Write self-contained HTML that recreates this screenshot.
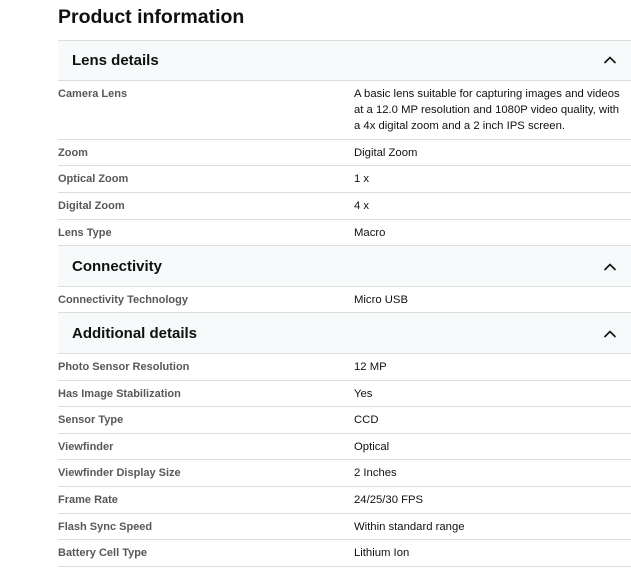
<!DOCTYPE html>
<html><head><style>
body{margin:0;background:#fff;font-family:"Liberation Sans",Arial,sans-serif;width:631px;height:569px;overflow:hidden;position:relative}
h1{position:absolute;left:58px;top:6px;margin:0;font-size:19.5px;font-weight:bold;color:#0f1111}
.r{position:absolute;left:58px;width:573px;border-bottom:1px solid #ddd;box-sizing:border-box}
.h{background:#f7fafa;border-top:1px solid #ddd}
.h span{position:absolute;left:14px;font-size:15px;font-weight:bold;color:#0f1111}
.h svg{position:absolute;left:545px}
.l{position:absolute;left:0;top:7px;font-size:11px;font-weight:bold;color:#565959}
.v{position:absolute;left:296px;top:5px;font-size:11.3px;line-height:16px;color:#0f1111;width:272px}
</style></head><body>
<h1>Product information</h1>

<div class="r h" style="top:40px;height:41px"><span style="top:11px">Lens details</span><svg style="top:14px" width="14" height="10" viewBox="0 0 14 10"><path d="M1.5 8 L7 2.5 L12.5 8" fill="none" stroke="#0f1111" stroke-width="1.6"/></svg></div>
<div class="r" style="top:81px;height:59px"><div class="l">Camera Lens</div><div class="v" style="top:5px">A basic lens suitable for capturing images and videos at a 12.0 MP resolution and 1080P video quality, with a 4x digital zoom and a 2 inch IPS screen.</div></div>
<div class="r" style="top:140px;height:26px"><div class="l">Zoom</div><div class="v">Digital Zoom</div></div>
<div class="r" style="top:166px;height:27px"><div class="l">Optical Zoom</div><div class="v">1 x</div></div>
<div class="r" style="top:193px;height:27px"><div class="l">Digital Zoom</div><div class="v">4 x</div></div>
<div class="r" style="top:220px;height:26px"><div class="l">Lens Type</div><div class="v">Macro</div></div>

<div class="r h" style="top:245px;height:42px"><span style="top:12px">Connectivity</span><svg style="top:16px" width="14" height="10" viewBox="0 0 14 10"><path d="M1.5 8 L7 2.5 L12.5 8" fill="none" stroke="#0f1111" stroke-width="1.6"/></svg></div>
<div class="r" style="top:287px;height:26px"><div class="l">Connectivity Technology</div><div class="v">Micro USB</div></div>

<div class="r h" style="top:312px;height:42px"><span style="top:12px">Additional details</span><svg style="top:16px" width="14" height="10" viewBox="0 0 14 10"><path d="M1.5 8 L7 2.5 L12.5 8" fill="none" stroke="#0f1111" stroke-width="1.6"/></svg></div>
<div class="r" style="top:354px;height:27px"><div class="l">Photo Sensor Resolution</div><div class="v">12 MP</div></div>
<div class="r" style="top:381px;height:26px"><div class="l">Has Image Stabilization</div><div class="v">Yes</div></div>
<div class="r" style="top:407px;height:27px"><div class="l">Sensor Type</div><div class="v">CCD</div></div>
<div class="r" style="top:434px;height:26px"><div class="l">Viewfinder</div><div class="v">Optical</div></div>
<div class="r" style="top:460px;height:27px"><div class="l">Viewfinder Display Size</div><div class="v">2 Inches</div></div>
<div class="r" style="top:487px;height:27px"><div class="l">Frame Rate</div><div class="v">24/25/30 FPS</div></div>
<div class="r" style="top:514px;height:26px"><div class="l">Flash Sync Speed</div><div class="v">Within standard range</div></div>
<div class="r" style="top:540px;height:27px"><div class="l">Battery Cell Type</div><div class="v">Lithium Ion</div></div>
</body></html>
